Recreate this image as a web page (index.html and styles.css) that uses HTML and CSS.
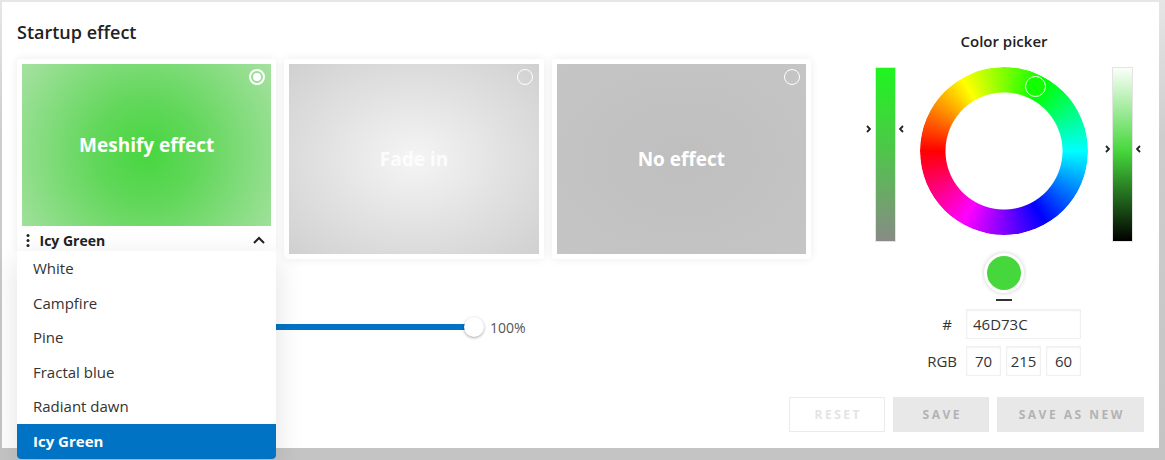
FILE: index.html
```html
<!DOCTYPE html>
<html>
<head>
<meta charset="utf-8">
<title>Startup effect</title>
<link rel="stylesheet" href="styles.css">
</head>
<body>
<div class="panel">
  <div class="left">
    <h1 class="title">Startup effect</h1>
    <div class="cards">
      <div class="card card-select">
        <div class="thumb thumb-mesh">
          <span class="radio radio-on"></span>
          <span class="thumb-label">Meshify effect</span>
        </div>
        <div class="select-head">
          <svg class="dots" width="4" height="13" viewBox="0 0 4 13"><circle cx="2" cy="1.6" r="1.5"/><circle cx="2" cy="6.5" r="1.5"/><circle cx="2" cy="11.4" r="1.5"/></svg>
          <span class="select-value">Icy Green</span>
          <svg class="chev" width="12" height="8" viewBox="0 0 12 8"><polyline points="1,7 6,2 11,7"/></svg>
        </div>
        <ul class="menu">
          <li>White</li>
          <li>Campfire</li>
          <li>Pine</li>
          <li>Fractal blue</li>
          <li>Radiant dawn</li>
          <li class="active">Icy Green</li>
        </ul>
      </div>
      <div class="card">
        <div class="thumb thumb-fade">
          <span class="radio"></span>
          <span class="thumb-label">Fade in</span>
        </div>
      </div>
      <div class="card">
        <div class="thumb thumb-none">
          <span class="radio"></span>
          <span class="thumb-label">No effect</span>
        </div>
      </div>
    </div>
    <div class="slider-row">
      <div class="track"><span class="knob"></span></div>
      <span class="pct">100%</span>
    </div>
  </div>

  <div class="picker">
    <div class="picker-title">Color picker</div>
    <div class="wheel-row">
      <div class="bar bar-sat">
        <svg class="mark mark-in mark-sat-l" width="5" height="8" viewBox="0 0 5 8"><polyline points="1,1 4,4 1,7"/></svg>
        <svg class="mark mark-out mark-sat-r" width="5" height="8" viewBox="0 0 5 8"><polyline points="4,1 1,4 4,7"/></svg>
      </div>
      <div class="wheel-wrap">
        <div class="wheel"></div>
        <span class="wheel-handle"></span>
      </div>
      <div class="bar bar-val">
        <svg class="mark mark-in mark-val-l" width="5" height="8" viewBox="0 0 5 8"><polyline points="1,1 4,4 1,7"/></svg>
        <svg class="mark mark-out mark-val-r" width="5" height="8" viewBox="0 0 5 8"><polyline points="4,1 1,4 4,7"/></svg>
      </div>
    </div>
    <div class="swatch"></div>
    <div class="swatch-line"></div>
    <div class="fields">
      <span class="f-label f-hash">#</span>
      <div class="box box-wide">46D73C</div>
      <span class="f-label">RGB</span>
      <div class="rgb">
        <div class="box box-num">70</div>
        <div class="box box-num">215</div>
        <div class="box box-num">60</div>
      </div>
    </div>
  </div>

  <div class="actions">
    <button class="btn btn-reset">Reset</button>
    <button class="btn btn-save">Save</button>
    <button class="btn btn-new">Save as new</button>
  </div>
</div>
</body>
</html>
```

FILE: styles.css
```css
* { box-sizing: border-box; }
html, body { margin: 0; height: 100%; }
body {
  background: linear-gradient(180deg, #e6e6e6 0, #cdcdcd 30%, #c4c4c4 100%);
  font-family: "Open Sans", "Liberation Sans", sans-serif;
  color: #333;
  overflow: hidden;
}
.panel {
  margin: 2px 0 0 2px;
  width: 1157px;
  height: 446px;
  background: #fff;
  padding: 18px 15px 0 15px;
  display: grid;
  grid-template-columns: 794px 1fr;
  grid-template-rows: auto auto;
  align-items: start;
  align-content: start;
}
.left { grid-column: 1; grid-row: 1; }
.title {
  margin: 0;
  font-size: 18px;
  font-weight: 600;
  line-height: 24px;
  color: #222;
}
.cards {
  display: flex;
  gap: 8px;
  margin-top: 15px;
  align-items: flex-start;
}
.card {
  flex: 1;
  background: #fff;
  padding: 5px;
  box-shadow: 0 0 10px rgba(0, 0, 0, 0.08);
  border-radius: 3px;
  position: relative;
}
.card-select { padding-bottom: 0; z-index: 3; }
.thumb {
  position: relative;
  height: 190px;
  display: flex;
  align-items: center;
  justify-content: center;
}
.thumb-mesh {
  height: 162px;
  background: radial-gradient(circle at 50% 55%, #47d640 0%, #62d75b 35%, #a6e1a1 100%);
}
.thumb-fade {
  background: radial-gradient(ellipse at center, #f5f5f5 0%, #e2e2e2 50%, #d0d0d0 100%);
}
.thumb-none {
  background: radial-gradient(ellipse at center, #bfbfbf 0%, #c5c5c5 100%);
}
.thumb-label {
  color: #fff;
  font-size: 19px;
  font-weight: 700;
}
.thumb-fade .thumb-label { color: rgba(255, 255, 255, 0.85); }
.radio {
  position: absolute;
  top: 5px;
  right: 6px;
  width: 16px;
  height: 16px;
  border: 1.5px solid #fff;
  border-radius: 50%;
}
.radio-on { border-width: 2px; }
.radio-on::after {
  content: "";
  position: absolute;
  inset: 2px;
  background: #fff;
  border-radius: 50%;
}
.select-head {
  height: 25px;
  padding: 3px 6px 0 3.5px;
  display: flex;
  align-items: center;
}
.dots { fill: #222; }
.select-value {
  margin-left: 10px;
  font-size: 14px;
  font-weight: 700;
  color: #222;
}
.chev {
  margin-left: auto;
  fill: none;
  stroke: #222;
  stroke-width: 2;
}
.menu {
  position: absolute;
  top: 100%;
  left: 0;
  right: 0;
  margin: 0;
  padding: 0;
  list-style: none;
  background: #fff;
  box-shadow: 0 8px 30px rgba(0, 0, 0, 0.12);
  border-radius: 0 0 4px 4px;
}
.menu li {
  height: 34.6px;
  line-height: 34.6px;
  padding-left: 16px;
  font-size: 15px;
  color: #333;
}
.menu li.active {
  background: #0073c4;
  color: #fff;
  font-weight: 700;
  border-radius: 0 0 4px 4px;
}
.slider-row {
  margin-top: 57px;
  height: 22px;
  display: flex;
  align-items: center;
}
.track {
  margin-left: 16px;
  width: 441px;
  height: 6px;
  background: #0073c6;
  position: relative;
}
.knob {
  position: absolute;
  right: -10px;
  top: 50%;
  margin-top: -10px;
  width: 20px;
  height: 20px;
  background: #fff;
  border-radius: 50%;
  box-shadow: 0 1px 3px rgba(0, 0, 0, 0.35);
}
.pct {
  margin-left: 16px;
  font-size: 14px;
  color: #555;
}

.picker {
  grid-column: 2;
  grid-row: 1;
  justify-self: end;
  width: 280px;
  display: flex;
  flex-direction: column;
  align-items: center;
}
.picker-title {
  margin-top: 11px;
  font-size: 15px;
  font-weight: 600;
  line-height: 20px;
  color: #222;
}
.wheel-row {
  margin-top: 16px;
  width: 100%;
  padding: 0 11px;
  display: flex;
  justify-content: space-between;
  align-items: flex-start;
}
.bar {
  width: 21px;
  height: 175px;
  border: 1px solid #e4e4e4;
  position: relative;
}
.bar-sat { background: linear-gradient(180deg, #1ff51f 0%, #52c34d 50%, #888a86 100%); }
.bar-val { background: linear-gradient(180deg, #fbfffb 0%, #46d73c 48%, #000 100%); }
.mark {
  position: absolute;
  fill: none;
  stroke: #222;
  stroke-width: 1.8;
}
.mark-sat-l { left: -10px; top: 57px; }
.mark-sat-r { right: -9px; top: 57px; }
.mark-val-l { left: -8px; top: 77px; }
.mark-val-r { right: -9px; top: 77px; }
.wheel-wrap {
  position: relative;
  width: 168px;
  height: 168px;
}
.wheel {
  width: 168px;
  height: 168px;
  border-radius: 50%;
  background: conic-gradient(from 270deg, #f00, #ff0, #0f0, #0ff, #00f, #f0f, #f00);
  -webkit-mask: radial-gradient(circle closest-side, transparent 58px, #000 59px);
  mask: radial-gradient(circle closest-side, transparent 58px, #000 59px);
}
.wheel-handle {
  position: absolute;
  left: 105px;
  top: 9px;
  width: 21px;
  height: 21px;
  border-radius: 50%;
  border: 1.5px solid #fff;
  background: #12ff00;
}
.swatch {
  margin-top: 11px;
  width: 40px;
  height: 40px;
  border-radius: 50%;
  background: #46d73c;
  border: 3px solid #fff;
  box-shadow: 0 0 4px rgba(0, 0, 0, 0.2);
}
.swatch-line {
  margin-top: 6px;
  width: 16px;
  height: 2px;
  background: #333;
}
.fields {
  margin-top: 8px;
  display: grid;
  grid-template-columns: 30px 115px;
  column-gap: 9px;
  row-gap: 7px;
  align-items: center;
}
.f-label {
  text-align: right;
  font-size: 15px;
  color: #333;
}
.f-hash { padding-right: 5px; }
.box {
  height: 30px;
  border: 1px solid #f0f0f0;
  box-shadow: inset 0 1px 2px rgba(0, 0, 0, 0.06);
  font-size: 15px;
  color: #333;
  display: flex;
  align-items: center;
}
.box-wide { padding-left: 6px; }
.rgb { display: flex; gap: 5px; }
.box-num { width: 35px; justify-content: center; }

.actions {
  grid-column: 1 / -1;
  grid-row: 2;
  display: flex;
  justify-content: flex-end;
  gap: 8px;
  margin-top: 21px;
}
.btn {
  height: 35px;
  font-family: inherit;
  font-size: 12px;
  font-weight: 700;
  letter-spacing: 2.5px;
  text-transform: uppercase;
  border: none;
  background: #e8e8e8;
  color: #b3b3b3;
  padding: 0 0 0 2.5px;
}
.btn-reset {
  width: 96px;
  background: #fff;
  border: 1px solid #ebebeb;
  color: #e4e4e4;
}
.btn-save { width: 96px; }
.btn-new { width: 147px; }
```
